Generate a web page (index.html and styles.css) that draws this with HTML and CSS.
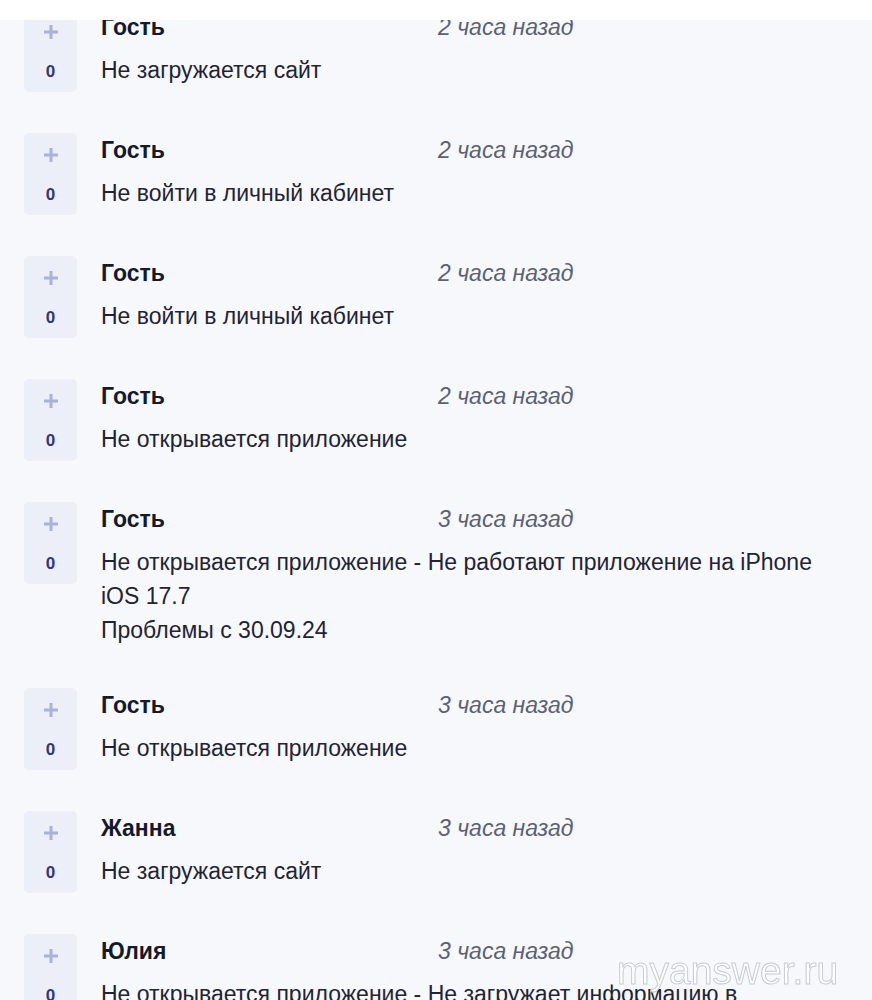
FILE: index.html
```html
<!DOCTYPE html>
<html lang="ru">
<head>
<meta charset="utf-8">
<title>Комментарии</title>
<link rel="stylesheet" href="styles.css">
</head>
<body>
<div class="topbar"></div>
<ul class="comments">
  <li class="comment">
    <div class="vote"><span class="plus"><svg width="16" height="16" viewBox="0 0 16 16"><path d="M8 1v14M1 8h14" stroke="currentColor" stroke-width="3"/></svg></span><span class="count">0</span></div>
    <div class="body">
      <div class="head"><span class="name">Гость</span><span class="time">2 часа назад</span></div>
      <div class="text">Не загружается сайт</div>
    </div>
  </li>
  <li class="comment">
    <div class="vote"><span class="plus"><svg width="16" height="16" viewBox="0 0 16 16"><path d="M8 1v14M1 8h14" stroke="currentColor" stroke-width="3"/></svg></span><span class="count">0</span></div>
    <div class="body">
      <div class="head"><span class="name">Гость</span><span class="time">2 часа назад</span></div>
      <div class="text">Не войти в личный кабинет</div>
    </div>
  </li>
  <li class="comment">
    <div class="vote"><span class="plus"><svg width="16" height="16" viewBox="0 0 16 16"><path d="M8 1v14M1 8h14" stroke="currentColor" stroke-width="3"/></svg></span><span class="count">0</span></div>
    <div class="body">
      <div class="head"><span class="name">Гость</span><span class="time">2 часа назад</span></div>
      <div class="text">Не войти в личный кабинет</div>
    </div>
  </li>
  <li class="comment">
    <div class="vote"><span class="plus"><svg width="16" height="16" viewBox="0 0 16 16"><path d="M8 1v14M1 8h14" stroke="currentColor" stroke-width="3"/></svg></span><span class="count">0</span></div>
    <div class="body">
      <div class="head"><span class="name">Гость</span><span class="time">2 часа назад</span></div>
      <div class="text">Не открывается приложение</div>
    </div>
  </li>
  <li class="comment">
    <div class="vote"><span class="plus"><svg width="16" height="16" viewBox="0 0 16 16"><path d="M8 1v14M1 8h14" stroke="currentColor" stroke-width="3"/></svg></span><span class="count">0</span></div>
    <div class="body">
      <div class="head"><span class="name">Гость</span><span class="time">3 часа назад</span></div>
      <div class="text">Не открывается приложение - Не работают приложение на iPhone<br>iOS 17.7<br>Проблемы с 30.09.24</div>
    </div>
  </li>
  <li class="comment">
    <div class="vote"><span class="plus"><svg width="16" height="16" viewBox="0 0 16 16"><path d="M8 1v14M1 8h14" stroke="currentColor" stroke-width="3"/></svg></span><span class="count">0</span></div>
    <div class="body">
      <div class="head"><span class="name">Гость</span><span class="time">3 часа назад</span></div>
      <div class="text">Не открывается приложение</div>
    </div>
  </li>
  <li class="comment">
    <div class="vote"><span class="plus"><svg width="16" height="16" viewBox="0 0 16 16"><path d="M8 1v14M1 8h14" stroke="currentColor" stroke-width="3"/></svg></span><span class="count">0</span></div>
    <div class="body">
      <div class="head"><span class="name">Жанна</span><span class="time">3 часа назад</span></div>
      <div class="text">Не загружается сайт</div>
    </div>
  </li>
  <li class="comment">
    <div class="vote"><span class="plus"><svg width="16" height="16" viewBox="0 0 16 16"><path d="M8 1v14M1 8h14" stroke="currentColor" stroke-width="3"/></svg></span><span class="count">0</span></div>
    <div class="body">
      <div class="head"><span class="name">Юлия</span><span class="time">3 часа назад</span></div>
      <div class="text">Не открывается приложение - Не загружает информацию в</div>
    </div>
  </li>
</ul>
<div class="watermark">myanswer.ru</div>
</body>
</html>
```
FILE: styles.css
```css
html, body {
  margin: 0;
  padding: 0;
  height: 100%;
  overflow: hidden;
}
body {
  background: #f7f8fc;
  font-family: "Liberation Sans", Arial, sans-serif;
  color: #262b3b;
}
.topbar {
  position: fixed;
  top: 0;
  left: 0;
  right: 0;
  height: 20px;
  background: #ffffff;
  z-index: 2;
}
.comments {
  list-style: none;
  margin: 0;
  padding: 10px 0 0 24px;
}
.comment {
  display: flex;
  align-items: flex-start;
  gap: 24px;
  margin-bottom: 41px;
}
.vote {
  flex: 0 0 53px;
  height: 82px;
  background: #edeff8;
  border-radius: 5px;
  display: flex;
  flex-direction: column;
  align-items: center;
  box-sizing: border-box;
  padding-top: 14px;
}
.plus {
  color: #a9b2dc;
  height: 16px;
  display: flex;
}
.count {
  margin-top: 22px;
  font-size: 17px;
  font-weight: bold;
  color: #2f3583;
  line-height: 20px;
}
.body {
  flex: 1;
  white-space: nowrap;
}
.head {
  display: flex;
  line-height: 34px;
  margin-bottom: 9px;
}
.name {
  width: 337px;
  font-size: 23px;
  font-weight: bold;
  color: #151a2b;
}
.time {
  font-size: 23px;
  font-style: italic;
  color: #5b6173;
}
.text {
  font-size: 23px;
  line-height: 34px;
  color: #1f2434;
}
.watermark {
  position: fixed;
  left: 617px;
  top: 949px;
  font-size: 39px;
  color: rgba(255, 255, 255, 0.9);
  -webkit-text-stroke: 1px #c9cbd2;
  z-index: 3;
}
```
